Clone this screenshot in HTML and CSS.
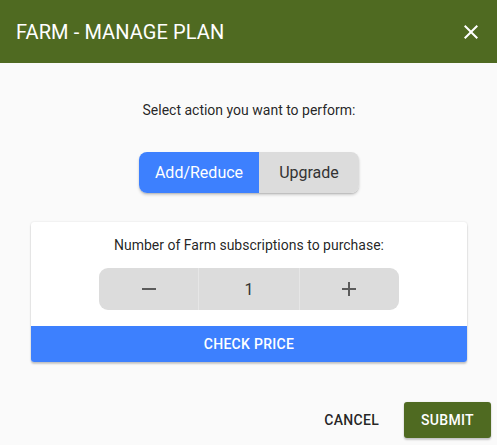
FILE: index.html
```html
<!DOCTYPE html>
<html>
<head>
<meta charset="utf-8">
<link rel="stylesheet" href="styles.css">
</head>
<body>
<div class="dialog">
  <div class="header">
    <div class="title">FARM - MANAGE PLAN</div>
    <svg class="close" viewBox="0 0 24 24" width="24" height="24"><path fill="#fff" d="M19 6.41L17.59 5 12 10.59 6.41 5 5 6.41 10.59 12 5 17.59 6.41 19 12 13.41 17.59 19 19 17.59 13.41 12z"/></svg>
  </div>
  <div class="content">
    <div class="prompt">Select action you want to perform:</div>
    <div class="toggle">
      <div class="opt opt-active">Add/Reduce</div>
      <div class="opt opt-plain">Upgrade</div>
    </div>
    <div class="card">
      <div class="card-label">Number of Farm subscriptions to purchase:</div>
      <div class="stepper">
        <div class="step"><svg viewBox="0 0 24 24" width="24" height="24"><path fill="#5b5b5b" d="M19 13H5v-2h14v2z"/></svg></div>
        <div class="step value">1</div>
        <div class="step"><svg viewBox="0 0 24 24" width="24" height="24"><path fill="#5b5b5b" d="M19 13h-6v6h-2v-6H5v-2h6V5h2v6h6v2z"/></svg></div>
      </div>
      <div class="check">CHECK PRICE</div>
    </div>
  </div>
  <div class="footer">
    <div class="btn-text">CANCEL</div>
    <div class="btn-submit">SUBMIT</div>
  </div>
</div>
</body>
</html>
```
FILE: styles.css
```css
* { box-sizing: border-box; }
html, body { margin: 0; padding: 0; }
body {
  font-family: Roboto, "Liberation Sans", sans-serif;
  background: #fafafa;
  color: rgba(0,0,0,0.87);
}
.dialog {
  width: 497px;
  height: 445px;
  background: #fafafa;
  display: flex;
  flex-direction: column;
}
.header {
  height: 63px;
  background: #4f6a21;
  display: flex;
  align-items: center;
  justify-content: space-between;
  padding: 0 14px 0 16px;
  flex-shrink: 0;
}
.title {
  color: #fff;
  font-size: 20px;
  letter-spacing: 0.1px;
}
.close { display: block; }
.content {
  padding: 37px 30px 0 31px;
  display: flex;
  flex-direction: column;
  align-items: center;
}
.prompt {
  font-size: 14px;
  line-height: 20px;
  text-align: center;
}
.toggle {
  margin-top: 32px;
  display: flex;
  border-radius: 8px;
  overflow: hidden;
  box-shadow: 0 2px 3px rgba(0,0,0,0.18), 0 1px 1px rgba(0,0,0,0.1);
  height: 41px;
}
.opt {
  display: flex;
  align-items: center;
  justify-content: center;
  font-size: 16px;
}
.opt-active {
  width: 120px;
  background: #3d80fe;
  color: #fff;
}
.opt-plain {
  width: 100px;
  background: #dcdcdc;
  color: #333;
}
.card {
  margin-top: 29px;
  width: 436px;
  background: #fff;
  border-radius: 3px;
  overflow: hidden;
  box-shadow: 0 2px 2px rgba(0,0,0,0.2), 0 0 2px rgba(0,0,0,0.12);
  display: flex;
  flex-direction: column;
  align-items: center;
}
.card-label {
  margin-top: 13px;
  font-size: 14px;
  line-height: 20px;
}
.stepper {
  margin-top: 13px;
  width: 300px;
  height: 42px;
  background: #dcdcdc;
  border-radius: 9px;
  display: flex;
}
.step {
  flex: 1;
  display: flex;
  align-items: center;
  justify-content: center;
}
.step + .step { border-left: 1px solid #e6e6e6; }
.step svg { display: block; }
.value {
  font-size: 16px;
  color: #333;
}
.check {
  margin-top: 16px;
  width: 100%;
  height: 36px;
  background: #3d80fe;
  color: #fff;
  font-size: 14px;
  font-weight: 500;
  display: flex;
  align-items: center;
  justify-content: center;
  letter-spacing: 0.3px;
}
.footer {
  margin-top: auto;
  display: flex;
  align-items: center;
  justify-content: flex-end;
  padding: 0 6px 7px 0;
  gap: 9px;
}
.btn-text {
  font-size: 14px;
  font-weight: 500;
  height: 36px;
  display: flex;
  align-items: center;
  padding: 0 16px;
  letter-spacing: 0.3px;
}
.btn-submit {
  font-size: 14px;
  font-weight: 500;
  height: 36px;
  width: 87px;
  display: flex;
  align-items: center;
  justify-content: center;
  background: #4f6a21;
  color: #fff;
  border-radius: 3px;
  letter-spacing: 0.3px;
  box-shadow: 0 2px 2px rgba(0,0,0,0.2), 0 0 2px rgba(0,0,0,0.1);
}
```
